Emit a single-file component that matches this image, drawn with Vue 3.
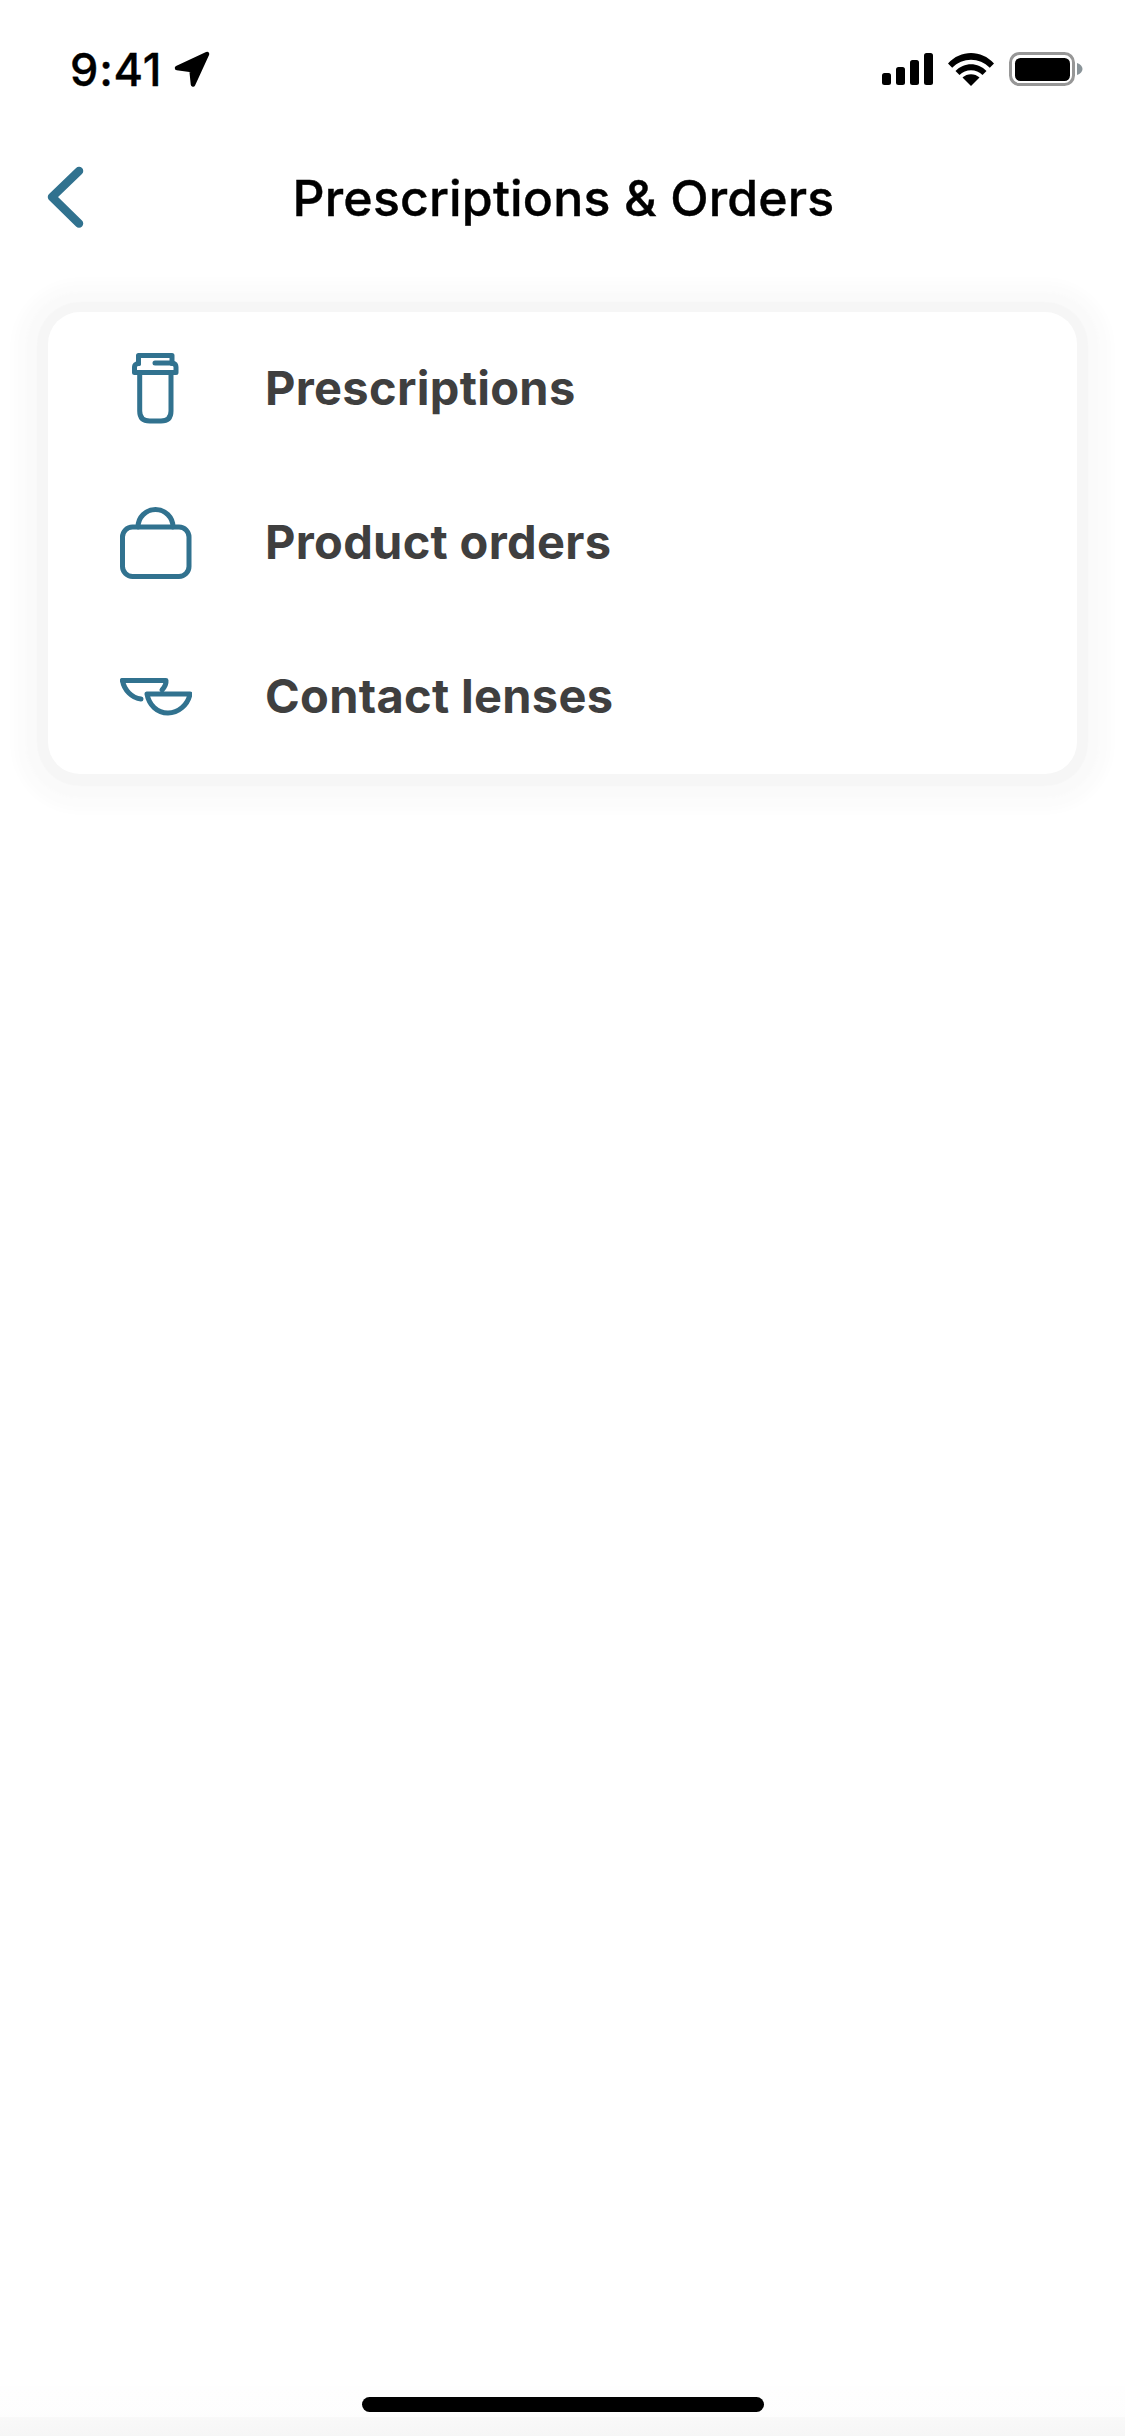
<script setup>
const rows = [
  { label: 'Prescriptions', icon: 'bottle' },
  { label: 'Product orders', icon: 'bag' },
  { label: 'Contact lenses', icon: 'lens' }
]
</script>

<template>
  <div class="page">
    <header class="status">
      <div class="status-left">
        <span class="time">9:41</span>
        <svg class="arrow" width="36" height="37" viewBox="0 0 36 37">
          <path d="M3 17 L33 3 L19 33.500 L17.500 19 Z" fill="#000" stroke="#000" stroke-width="4.500" stroke-linejoin="round" />
        </svg>
      </div>
      <div class="status-right">
        <svg class="signal" width="51" height="32" viewBox="0 0 51 32">
          <rect x="0" y="20" width="9" height="12" rx="2.500" />
          <rect x="14" y="14" width="9" height="18" rx="2.500" />
          <rect x="28" y="7" width="9" height="25" rx="2.500" />
          <rect x="42" y="0" width="9" height="32" rx="2.500" />
        </svg>
        <svg class="wifi" width="46" height="33" viewBox="0 0 46 33">
          <path d="M23 33 L14.500 24.500 C19 20 27 20 31.500 24.500 Z" />
          <path d="M7.500 18 L11.500 22 C17.500 15.500 28.500 15.500 34.500 22 L38.500 18 C30 9 16 9 7.500 18 Z" />
          <path d="M0 10.500 L4.200 14.700 C14.500 4 31.500 4 41.800 14.700 L46 10.500 C33.500 -3.500 12.500 -3.500 0 10.500 Z" />
        </svg>
        <svg class="battery" width="74" height="34" viewBox="0 0 74 34">
          <rect x="1.500" y="1.500" width="63" height="31" rx="9" fill="none" stroke="#979797" stroke-width="3" />
          <rect x="6" y="6" width="55" height="23" rx="5.500" fill="#000" />
          <path d="M68 11 C71.500 12 73.500 14.500 73.500 17 C73.500 19.500 71.500 22 68 23 Z" fill="#8a9499" />
        </svg>
      </div>
    </header>

    <nav class="nav">
      <button class="back" type="button" aria-label="Back">
        <svg width="40" height="64" viewBox="0 0 40 64">
          <path d="M33 6 L6 32 L33 58.500" fill="none" stroke="#31728f" stroke-width="8.500" stroke-linecap="round" stroke-linejoin="round" />
        </svg>
      </button>
      <h1 class="title">Prescriptions &amp; Orders</h1>
      <span></span>
    </nav>

    <main class="main">
      <section class="card">
        <div v-for="row in rows" :key="row.label" class="row">
          <svg class="icon" width="72" height="72" viewBox="0 0 72 72" fill="none" stroke="#31728f" stroke-width="5" stroke-linecap="round" stroke-linejoin="round">
            <g v-if="row.icon === 'bottle'">
              <path d="M18.500 10.500 V2.500 H52 V10.500" />
              <path d="M35 10 H52.500 Q56 11 56 14 V19.500 H14.500 V14 Q14.500 11 18.500 10.500" />
              <path d="M19.700 19.500 V58 Q19.700 68 29.700 68 H41 Q51 68 51 58 V19.500" />
            </g>
            <g v-else-if="row.icon === 'bag'">
              <rect x="2.500" y="20" width="66.500" height="49.500" rx="10" />
              <path d="M18 20 A17.500 17.500 0 0 1 53 20" />
            </g>
            <g v-else>
              <path d="M2.500 19.500 H46 Q46.500 24 42 29" />
              <path d="M2.500 19.500 C4 29 12 37 21 38" />
              <path d="M27 33 H70 C68 44 58 52 48 52 C37 52 29 44 27 33 Z" />
            </g>
          </svg>
          <span class="label">{{ row.label }}</span>
        </div>
      </section>
    </main>

    <footer class="foot">
      <div class="home"></div>
      <div class="edge"></div>
    </footer>
  </div>
</template>

<style scoped>
.page {
  width: 1125px;
  height: 2436px;
  display: flex;
  flex-direction: column;
  background: #fff;
  font-family: Inter, "Liberation Sans", sans-serif;
  overflow: hidden;
}
.status {
  height: 132px;
  flex: none;
  padding: 51px 42px 0 70px;
  box-sizing: border-box;
  display: flex;
  justify-content: space-between;
  align-items: flex-start;
}
.status-left {
  display: flex;
  align-items: center;
  height: 37px;
}
.time {
  font-size: 45px;
  font-weight: 500;
  line-height: 37px;
  color: #000;
  letter-spacing: 0.8px;
  -webkit-text-stroke: 0.4px #000;
}
.arrow {
  margin-left: 12px;
}
.status-right {
  display: flex;
  align-items: center;
  gap: 15px;
  height: 36px;
}
.wifi {
  fill: #000;
}
.nav {
  flex: none;
  height: 130px;
  display: grid;
  grid-template-columns: 1fr auto 1fr;
  align-items: center;
  padding: 0 46px;
  box-sizing: border-box;
}
.back {
  padding: 0;
  border: 0;
  background: none;
  width: 40px;
  height: 64px;
  justify-self: start;
}
.back svg {
  display: block;
}
.title {
  margin: 2px 0 0 2px;
  font-size: 50px;
  font-weight: 500;
  color: #000;
  line-height: 60px;
  letter-spacing: 0.15px;
  -webkit-text-stroke: 0.4px #000;
}
.main {
  flex: 1;
  padding: 50px 48px 0;
}
.card {
  background: #fff;
  border-radius: 32px;
  box-shadow: 0 1px 1px 11px #f6f6f6, 0 2px 3px 22px #fafafa, 0 3px 12px 34px #fcfcfc;
}
.row {
  height: 154px;
  display: flex;
  align-items: center;
  gap: 72px;
  padding-left: 72px;
}
.icon {
  flex: none;
}
.label {
  font-size: 47px;
  font-weight: 700;
  color: #3f3f3f;
  letter-spacing: 0.3px;
  padding-bottom: 3px;
  margin-left: 1px;
}
.foot {
  flex: none;
  display: flex;
  flex-direction: column;
  align-items: center;
  height: 50px;
  background: linear-gradient(#fefefe, #fdfdfd);
}
.home {
  width: 402px;
  height: 15px;
  border-radius: 8px;
  background: #000;
  margin-top: 11px;
  flex: none;
}
.edge {
  width: 100%;
  flex: 1;
  margin-top: 5px;
  background: linear-gradient(#f9f9f9, #f6f6f6);
}
</style>

<style>
html, body {
  margin: 0;
  background: #fff;
}
</style>
